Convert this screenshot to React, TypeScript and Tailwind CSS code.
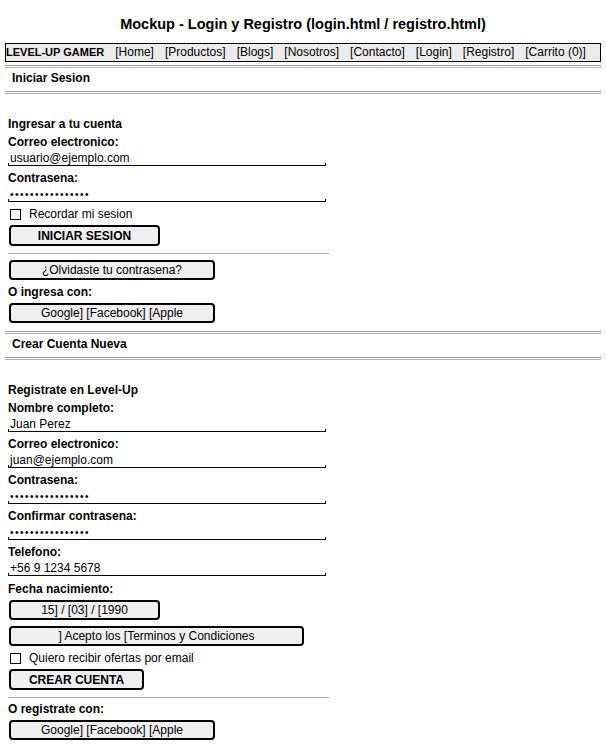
const links = ["Home", "Productos", "Blogs", "Nosotros", "Contacto", "Login", "Registro", "Carrito (0)"];

const DoubleRule = () => <div className="mx-[5px] h-[3px] border-y border-t-[#9c9c9c] border-b-[#b4b4b4]" />;

const SingleRule = ({ className = "" }: { className?: string }) => (
    <div className={`ml-[8px] h-px w-[321px] bg-[#aaaaaa] ${className}`} />
);

const SectionHeader = ({ children }: { children: string }) => (
    <div className="mt-px ml-[12px] h-[18px] font-bold leading-[18px]">{children}</div>
);

const Label = ({ children, className = "" }: { children: string; className?: string }) => (
    <div className={`ml-[8px] h-[18px] font-bold leading-[18px] ${className}`}>{children}</div>
);

const Field = ({ value, secret }: { value: string; secret?: boolean }) => (
    <div className="ml-[8px] flex w-[318px] items-end">
        <div className="h-[3px] w-px bg-black" />
        <div className="h-[15px] flex-1 border-b border-black pl-px leading-[14px]">
            {secret ? (
                <span className="text-[10px] leading-[16px] tracking-[1.5px]">{"\u2022".repeat(16)}</span>
            ) : (
                value
            )}
        </div>
        <div className="h-[3px] w-px bg-black" />
    </div>
);

const Check = ({ children }: { children: string }) => (
    <div className="ml-[10px] flex h-[18px] items-center gap-[8px]">
        <div className="size-[11px] border border-black bg-white" />
        <span>{children}</span>
    </div>
);

const Btn = ({ children, w, bold, className = "" }: { children: string; w: string; bold?: boolean; className?: string }) => (
    <div
        className={`ml-[9px] flex h-[20px] items-center justify-center rounded-[4px] border-2 border-black bg-[#efefef] leading-none ${w} ${
            bold ? "font-bold" : ""
        } ${className}`}
    >
        {children}
    </div>
);

export default function App() {
    return (
        <div className="min-h-[744px] bg-white font-['Liberation_Sans',Arial,sans-serif] text-[12px] text-black">
            <h1 className="pt-[16px] text-center text-[14.5px] font-bold leading-[16px]">
                Mockup - Login y Registro (login.html / registro.html)
            </h1>
            <nav className="mx-[5px] mt-[11px] flex h-[19px] items-center gap-[11px] border border-black bg-[#ececec] leading-[17px]">
                <span className="text-[11px] font-bold">LEVEL-UP GAMER</span>
                {links.map((l) => (
                    <span key={l}>[{l}]</span>
                ))}
            </nav>

            <div className="mt-[3px]">
                <DoubleRule />
            </div>
            <SectionHeader>Iniciar Sesion</SectionHeader>
            <div className="mt-[4px]">
                <DoubleRule />
            </div>

            <Label className="mt-[21px]">Ingresar a tu cuenta</Label>
            <Label>Correo electronico:</Label>
            <Field value="usuario@ejemplo.com" />
            <Label className="mt-[3px]">Contrasena:</Label>
            <Field value="" secret />
            <div className="mt-[3px]">
                <Check>Recordar mi sesion</Check>
            </div>
            <Btn w="w-[151px]" bold className="mt-[2px] h-[21px]">
                INICIAR SESION
            </Btn>
            <SingleRule className="mt-[7px]" />
            <Btn w="w-[206px]" className="mt-[6px]">
                ¿Olvidaste tu contrasena?
            </Btn>
            <Label className="mt-[3px]">O ingresa con:</Label>
            <Btn w="w-[206px]" className="mt-[2px]">
                Google] [Facebook] [Apple
            </Btn>

            <div className="mt-[8px]">
                <DoubleRule />
            </div>
            <SectionHeader>Crear Cuenta Nueva</SectionHeader>
            <div className="mt-[4px]">
                <DoubleRule />
            </div>

            <Label className="mt-[21px]">Registrate en Level-Up</Label>
            <Label>Nombre completo:</Label>
            <Field value="Juan Perez" />
            <Label className="mt-[3px]">Correo electronico:</Label>
            <Field value="juan@ejemplo.com" />
            <Label className="mt-[3px]">Contrasena:</Label>
            <Field value="" secret />
            <Label className="mt-[3px]">Confirmar contrasena:</Label>
            <Field value="" secret />
            <Label className="mt-[3px]">Telefono:</Label>
            <Field value="+56 9 1234 5678" />
            <Label className="mt-[4px]">Fecha nacimiento:</Label>
            <Btn w="w-[151px]" className="mt-[2px]">
                15] / [03] / [1990
            </Btn>
            <Btn w="w-[295px]" className="mt-[6px]">
                ] Acepto los [Terminos y Condiciones
            </Btn>
            <div className="mt-[3px]">
                <Check>Quiero recibir ofertas por email</Check>
            </div>
            <Btn w="w-[135px]" bold className="mt-[2px] h-[21px]">
                CREAR CUENTA
            </Btn>
            <SingleRule className="mt-[7px]" />
            <Label className="mt-[2px]">O registrate con:</Label>
            <Btn w="w-[206px]" className="mt-[2px]">
                Google] [Facebook] [Apple
            </Btn>
        </div>
    );
}
